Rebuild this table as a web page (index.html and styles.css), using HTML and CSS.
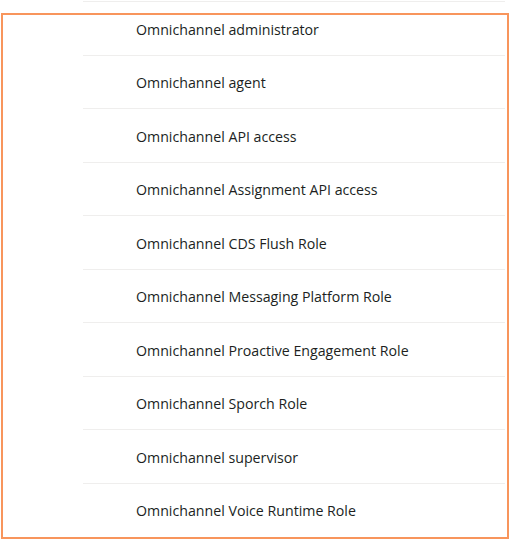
FILE: index.html
```html
<!DOCTYPE html>
<html lang="en">
<head>
<meta charset="utf-8">
<title>Roles</title>
<link rel="stylesheet" href="styles.css">
</head>
<body>
<div class="page">
  <ul class="role-list">
    <li class="role-row"><span class="role-name">Omnichannel administrator</span></li>
    <li class="role-row"><span class="role-name">Omnichannel agent</span></li>
    <li class="role-row"><span class="role-name">Omnichannel API access</span></li>
    <li class="role-row"><span class="role-name">Omnichannel Assignment API access</span></li>
    <li class="role-row"><span class="role-name">Omnichannel CDS Flush Role</span></li>
    <li class="role-row"><span class="role-name">Omnichannel Messaging Platform Role</span></li>
    <li class="role-row"><span class="role-name">Omnichannel Proactive Engagement Role</span></li>
    <li class="role-row"><span class="role-name">Omnichannel Sporch Role</span></li>
    <li class="role-row"><span class="role-name">Omnichannel supervisor</span></li>
    <li class="role-row"><span class="role-name">Omnichannel Voice Runtime Role</span></li>
  </ul>
  <div class="highlight"></div>
</div>
</body>
</html>
```
FILE: styles.css
```css
html, body {
  margin: 0;
  padding: 0;
  background: #ffffff;
}
body {
  font-family: "Open Sans", "Noto Sans", "Liberation Sans", sans-serif;
  font-size: 14.2px;
  color: #201f1e;
}
.page {
  position: relative;
  width: 509px;
  height: 539px;
  overflow: hidden;
}
.role-list {
  list-style: none;
  margin: 0;
  padding: 1px 4px 0 83px;
}
.role-row {
  display: flex;
  align-items: center;
  height: 52.5px;
  border-top: 1px solid #efeeed;
  padding-left: 53px;
}
.role-name {
  white-space: nowrap;
  padding-top: 2px;
}
.highlight {
  position: absolute;
  left: 1px;
  top: 13px;
  width: 504px;
  height: 522px;
  border: 2px solid #f8955c;
  pointer-events: none;
}
```
